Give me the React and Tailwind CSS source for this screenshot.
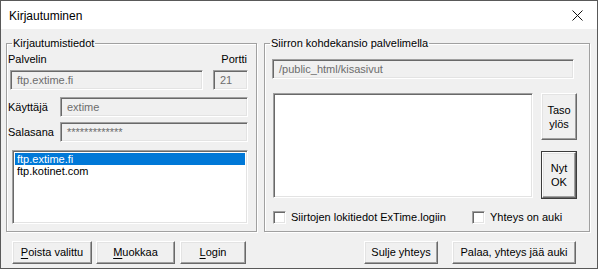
import React from "react";

const sunken =
  "border border-t-[#a0a0a0] border-l-[#a0a0a0] border-b-white border-r-white shadow-[inset_1px_1px_0_#696969,inset_-1px_-1px_0_#e3e3e3]";
const raised =
  "border border-t-white border-l-white border-b-[#696969] border-r-[#696969] shadow-[inset_-1px_-1px_0_#a0a0a0,inset_1px_1px_0_#e3e3e3] bg-[#f0f0f0]";

function Field({ value, className }) {
  return (
    <div className={`${sunken} bg-[#f0f0f0] h-[20px] flex items-center pl-[6px] text-[#6d6d6d] ${className}`}>
      {value}
    </div>
  );
}

function Btn({ children, className }) {
  return (
    <div className={`${raised} h-[23px] flex items-center justify-center ${className}`}>{children}</div>
  );
}

function Check({ label, className }) {
  return (
    <div className={`flex items-center gap-[5px] ${className}`}>
      <div className={`${sunken} bg-white w-[13px] h-[13px]`}></div>
      <span>{label}</span>
    </div>
  );
}

export default function App() {
  return (
    <div className="w-[598px] h-[269px] border border-[#595959] bg-[#f0f0f0] flex flex-col font-['Liberation_Sans',Arial,sans-serif] text-[11px] text-black overflow-hidden">
      {/* title bar */}
      <div className="h-[28px] bg-white flex items-center justify-between pl-[8px] pr-[14px] shrink-0">
        <span className="text-[12px] pt-[1px]">Kirjautuminen</span>
        <svg width="11" height="11" viewBox="0 0 11 11" className="mt-[1px]">
          <path d="M0.5 0.5 L10.5 10.5 M10.5 0.5 L0.5 10.5" stroke="#111" strokeWidth="1" />
        </svg>
      </div>

      {/* groups */}
      <div className="flex gap-[7px] pl-[5px] mt-[7px]">
        <fieldset className="w-[251px] h-[196px] border border-[#a0a0a0] shadow-[1px_1px_0_white,inset_1px_1px_0_white] p-0 m-0 min-w-0">
          <legend className="ml-[5px] px-[1px] leading-[14px]">Kirjautumistiedot</legend>
          <div className="flex justify-between pl-[1px] pr-[9px] mt-[2px] leading-[14px]">
            <span>Palvelin</span>
            <span>Portti</span>
          </div>
          <div className="flex mt-[4px] pl-[3px]">
            <Field value="ftp.extime.fi" className="w-[193px]" />
            <Field value="21" className="w-[35px] ml-[10px]" />
          </div>
          <div className="flex items-center mt-[7px] pl-[1px]">
            <span className="w-[52px]">Käyttäjä</span>
            <Field value="extime" className="w-[188px]" />
          </div>
          <div className="flex items-center mt-[5px] pl-[1px]">
            <span className="w-[52px]">Salasana</span>
            <Field value="*************" className="w-[188px]" />
          </div>
          <div className={`${sunken} bg-white w-[236px] h-[74px] ml-[5px] mt-[8px] p-[2px]`}>
            <div className="h-[12px] leading-[12px] bg-[#0078d7] text-white pl-[2px]">ftp.extime.fi</div>
            <div className="h-[13px] leading-[13px] pl-[2px]">ftp.kotinet.com</div>
          </div>
        </fieldset>

        <fieldset className="w-[326px] h-[196px] border border-[#a0a0a0] shadow-[1px_1px_0_white,inset_1px_1px_0_white] p-0 m-0 min-w-0">
          <legend className="ml-[5px] px-[1px] leading-[14px]">Siirron kohdekansio palvelimella</legend>
          <Field value="/public_html/kisasivut" className="w-[302px] ml-[7px] mt-[9px]" />
          <div className="flex mt-[14px] ml-[8px]">
            <div className={`${sunken} bg-white w-[260px] h-[105px]`}></div>
            <div className="flex flex-col ml-[8px]">
              <Btn className="w-[36px] h-[47px] flex-col leading-[14px]">
                <span>Taso</span>
                <span>ylös</span>
              </Btn>
              <div className="mt-[11px] border border-[#3c3c3c] w-[36px] h-[48px]">
                <div className={`${raised} w-full h-full flex flex-col items-center justify-center leading-[14px]`}>
                  <span>Nyt</span>
                  <span>OK</span>
                </div>
              </div>
            </div>
          </div>
          <div className="flex mt-[10px] ml-[8px]">
            <Check label="Siirtojen lokitiedot ExTime.logiin" className="w-[199px]" />
            <Check label="Yhteys on auki" />
          </div>
        </fieldset>
      </div>

      {/* bottom buttons */}
      <div className="flex justify-between pl-[11px] pr-[21px] mt-[9px]">
        <div className="flex">
          <Btn className="w-[80px]">
            <span><u className="underline-offset-2">P</u>oista valittu</span>
          </Btn>
          <Btn className="w-[79px] ml-[4px]">
            <span><u className="underline-offset-2">M</u>uokkaa</span>
          </Btn>
          <Btn className="w-[66px] ml-[5px]">
            <span><u className="underline-offset-2">L</u>ogin</span>
          </Btn>
        </div>
        <div className="flex">
          <Btn className="w-[74px]">Sulje yhteys</Btn>
          <Btn className="w-[124px] ml-[14px]">Palaa, yhteys jää auki</Btn>
        </div>
      </div>
    </div>
  );
}
